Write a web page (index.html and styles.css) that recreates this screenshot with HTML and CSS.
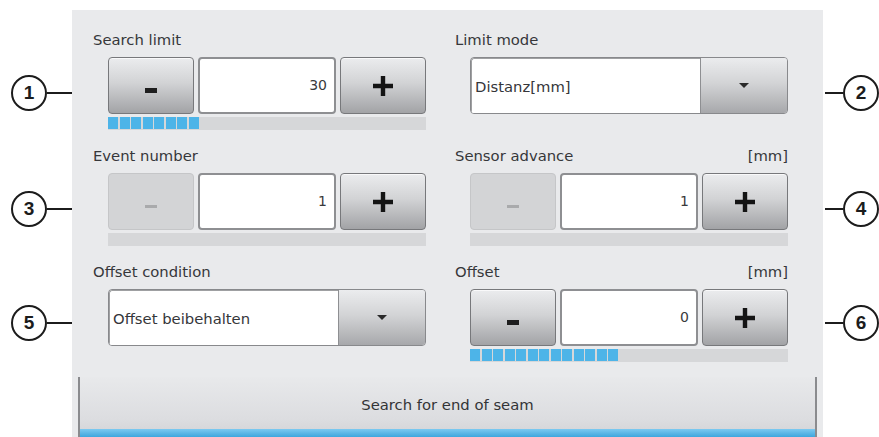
FILE: index.html
```html
<!DOCTYPE html>
<html lang="en">
<head>
<meta charset="utf-8">
<title>Seam search settings</title>
<link rel="stylesheet" href="styles.css">
</head>
<body>
<div class="page">
  <div class="callouts callouts-left">
    <div class="callout c1"><span class="num">1</span><span class="lead"></span></div>
    <div class="callout c2"><span class="num">3</span><span class="lead"></span></div>
    <div class="callout c3"><span class="num">5</span><span class="lead"></span></div>
  </div>

  <div class="panel">
    <div class="fields">
      <!-- Search limit -->
      <div class="field">
        <div class="label"><span>Search limit</span></div>
        <div class="control">
          <div class="stepper">
            <button class="step step-minus"><span class="dash"></span></button>
            <div class="value">30</div>
            <button class="step step-plus"><svg viewBox="0 0 22 22" width="22" height="22"><path d="M8.8 1h4.4v7.8H21v4.4h-7.8V21H8.8v-7.8H1V8.8h7.8z"/></svg></button>
          </div>
          <div class="meter"><i></i><i></i><i></i><i></i><i></i><i></i><i></i><i></i></div>
        </div>
      </div>

      <!-- Limit mode -->
      <div class="field">
        <div class="label"><span>Limit mode</span></div>
        <div class="control">
          <div class="select">
            <div class="select-text">Distanz[mm]</div>
            <div class="select-arrow"><span class="caret"></span></div>
          </div>
        </div>
      </div>

      <!-- Event number -->
      <div class="field">
        <div class="label"><span>Event number</span></div>
        <div class="control">
          <div class="stepper">
            <button class="step step-minus is-disabled"><span class="dash"></span></button>
            <div class="value">1</div>
            <button class="step step-plus"><svg viewBox="0 0 22 22" width="22" height="22"><path d="M8.8 1h4.4v7.8H21v4.4h-7.8V21H8.8v-7.8H1V8.8h7.8z"/></svg></button>
          </div>
          <div class="meter"></div>
        </div>
      </div>

      <!-- Sensor advance -->
      <div class="field">
        <div class="label"><span>Sensor advance</span><span>[mm]</span></div>
        <div class="control">
          <div class="stepper">
            <button class="step step-minus is-disabled"><span class="dash"></span></button>
            <div class="value">1</div>
            <button class="step step-plus"><svg viewBox="0 0 22 22" width="22" height="22"><path d="M8.8 1h4.4v7.8H21v4.4h-7.8V21H8.8v-7.8H1V8.8h7.8z"/></svg></button>
          </div>
          <div class="meter"></div>
        </div>
      </div>

      <!-- Offset condition -->
      <div class="field">
        <div class="label"><span>Offset condition</span></div>
        <div class="control">
          <div class="select">
            <div class="select-text">Offset beibehalten</div>
            <div class="select-arrow"><span class="caret"></span></div>
          </div>
        </div>
      </div>

      <!-- Offset -->
      <div class="field">
        <div class="label"><span>Offset</span><span>[mm]</span></div>
        <div class="control">
          <div class="stepper">
            <button class="step step-minus"><span class="dash"></span></button>
            <div class="value">0</div>
            <button class="step step-plus"><svg viewBox="0 0 22 22" width="22" height="22"><path d="M8.8 1h4.4v7.8H21v4.4h-7.8V21H8.8v-7.8H1V8.8h7.8z"/></svg></button>
          </div>
          <div class="meter"><i></i><i></i><i></i><i></i><i></i><i></i><i></i><i></i><i></i><i></i><i></i><i></i><i></i></div>
        </div>
      </div>
    </div>

    <button class="action">Search for end of seam</button>
  </div>

  <div class="callouts callouts-right">
    <div class="callout c1"><span class="lead"></span><span class="num">2</span></div>
    <div class="callout c2"><span class="lead"></span><span class="num">4</span></div>
    <div class="callout c3"><span class="lead"></span><span class="num">6</span></div>
  </div>
</div>
</body>
</html>
```

FILE: styles.css
```css
* {
  box-sizing: border-box;
}

html,
body {
  margin: 0;
  padding: 0;
  background: #ffffff;
}

body {
  font-family: "DejaVu Sans", "Liberation Sans", sans-serif;
  font-size: 14.8px;
  color: #333436;
}

.page {
  display: flex;
  width: 879px;
  height: 437px;
  overflow: hidden;
}

/* numbered callouts on both sides of the panel */
.callouts {
  display: flex;
  flex-direction: column;
  flex: 0 0 auto;
}

.callouts-left {
  width: 72px;
  padding-left: 11px;
}

.callouts-right {
  width: 56px;
  padding-left: 2px;
}

.callout {
  display: flex;
  align-items: center;
  height: 36px;
}

.callout.c1 { margin-top: 75px; }
.callout.c2 { margin-top: 80px; }
.callout.c3 { margin-top: 78px; }

.num {
  flex: 0 0 36px;
  width: 36px;
  height: 36px;
  border: 2px solid #1c1c1c;
  border-radius: 50%;
  display: flex;
  align-items: center;
  justify-content: center;
  font-family: "Liberation Sans", sans-serif;
  font-weight: bold;
  font-size: 19px;
  color: #1c1c1c;
}

.lead {
  flex: 1 1 auto;
  height: 2px;
  background: #1c1c1c;
}

/* settings panel */
.panel {
  flex: 0 0 751px;
  width: 751px;
  background: #e9eaec;
  margin-top: 10px;
  padding-top: 20px;
  display: flex;
  flex-direction: column;
}

.fields {
  display: grid;
  grid-template-columns: 333px 333px;
  column-gap: 29px;
  row-gap: 16px;
  padding: 0 35px 0 21px;
}

.label {
  display: flex;
  justify-content: space-between;
  height: 20px;
  line-height: 20px;
  margin-bottom: 7px;
  color: #36373a;
}

.control {
  margin-left: 15px;
}

/* stepper: minus / value / plus */
.stepper {
  display: grid;
  grid-template-columns: 86px 1fr 86px;
  column-gap: 4px;
  height: 57px;
}

.step {
  margin: 0;
  padding: 0;
  border: 1px solid #77787b;
  border-radius: 4px;
  background: linear-gradient(#ebecee 0%, #d2d3d5 45%, #a2a3a6 100%);
  box-shadow: inset 0 1px 0 rgba(255, 255, 255, 0.7);
  display: flex;
  align-items: center;
  justify-content: center;
}

.step svg path {
  fill: #141414;
}

.step-minus .dash {
  display: block;
  width: 12px;
  height: 5px;
  margin-top: 10px;
  background: #1e1e1e;
}

.step.is-disabled {
  background: #d3d4d6;
  border-color: #c5c6c8;
  box-shadow: none;
}

.step.is-disabled .dash {
  height: 3px;
  background: #a9aaac;
}

.value {
  background: #ffffff;
  border: 2px solid #8e8f92;
  border-radius: 4px;
  text-align: right;
  padding-right: 7px;
  line-height: 53px;
  font-size: 14px;
  color: #3a3a3c;
}

/* segmented level bar under a stepper */
.meter {
  display: flex;
  height: 13px;
  margin-top: 3px;
  padding: 0 0 1px 0;
  background: #d6d7d9;
}

.meter i {
  display: block;
  width: 10px;
  margin-right: 1.5px;
  background: #4db4e8;
}

/* drop-down */
.select {
  display: grid;
  grid-template-columns: 1fr 87px;
  height: 57px;
  border: 1px solid #88898c;
  border-radius: 4px;
  overflow: hidden;
}

.select-text {
  background: #ffffff;
  padding-left: 3px;
  line-height: 55px;
  color: #35363a;
  border: 1px solid #9fa0a2;
  border-right: none;
  border-radius: 3px 0 0 3px;
}

.select-arrow {
  display: flex;
  align-items: center;
  justify-content: center;
  border-left: 1px solid #8e8f92;
  background: linear-gradient(#ebecee 0%, #d2d3d5 45%, #a4a5a8 100%);
}

.caret {
  width: 0;
  height: 0;
  border-top: 5px solid #2a2a2a;
  border-left: 5px solid transparent;
  border-right: 5px solid transparent;
  margin-top: -2px;
}

/* wide action button along the bottom */
.action {
  position: relative;
  margin: 15px 6px 0 6px;
  height: 60px;
  padding: 0 0 6px 0;
  border: none;
  border-left: 2px solid #8a8b8e;
  border-right: 2px solid #8a8b8e;
  background: linear-gradient(#e8e9eb 0%, #dcdde0 70%, #d2d3d6 100%);
  font-family: inherit;
  font-size: 14.8px;
  color: #333436;
  text-align: center;
}

.action::after {
  content: "";
  position: absolute;
  left: 0;
  right: 0;
  bottom: 0;
  height: 8px;
  background: linear-gradient(#7cc9f0, #3ea6dd);
}
```
